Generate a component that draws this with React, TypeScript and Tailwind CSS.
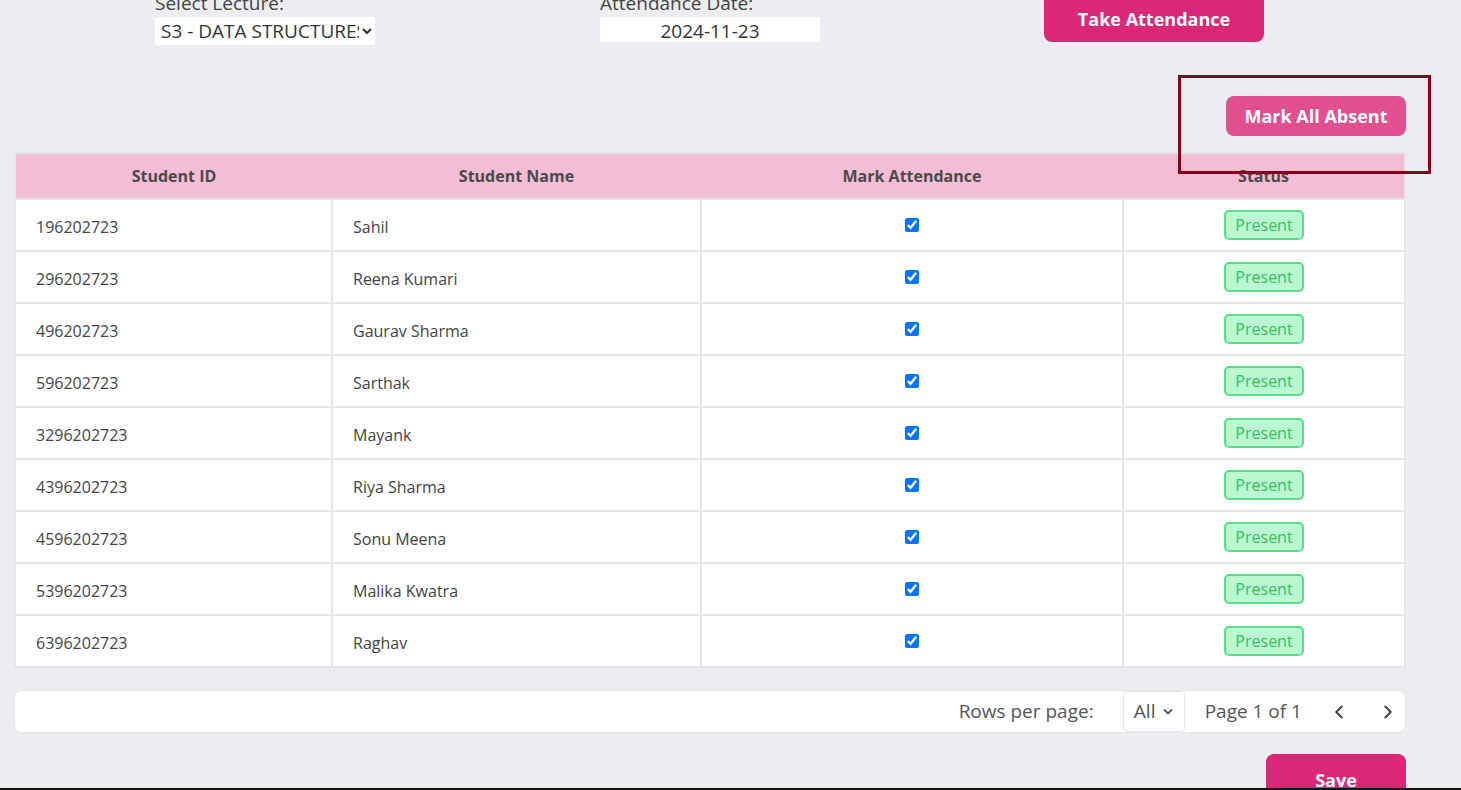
import { ChevronLeft, ChevronRight } from 'lucide-react'

const students = [
  { id: '196202723', name: 'Sahil' },
  { id: '296202723', name: 'Reena Kumari' },
  { id: '496202723', name: 'Gaurav Sharma' },
  { id: '596202723', name: 'Sarthak' },
  { id: '3296202723', name: 'Mayank' },
  { id: '4396202723', name: 'Riya Sharma' },
  { id: '4596202723', name: 'Sonu Meena' },
  { id: '5396202723', name: 'Malika Kwatra' },
  { id: '6396202723', name: 'Raghav' },
]

export default function App() {
  return (
    <div className="relative h-[790px] overflow-hidden bg-[#ecedf1] text-[#444] font-['Open_Sans','Noto_Sans',sans-serif]">
      <div className="pl-[14px] pr-[55px]">
        {/* Top controls */}
        <div className="flex h-[45px] items-start">
          <div className="ml-[141px] w-[220px] flex flex-col">
            <label className="-mt-[8px] text-[19px] leading-[22px] text-[#444]">Select Lecture:</label>
            <select className="mt-[3px] h-[28px] w-[220px] rounded-[3px] bg-white pl-[2px] text-[19px] text-[#333]">
              <option>S3 - DATA STRUCTURES</option>
            </select>
          </div>
          <div className="ml-[225px] w-[220px] flex flex-col">
            <label className="-mt-[8px] text-[19px] leading-[22px] text-[#444]">Attendance Date:</label>
            <input
              type="text"
              readOnly
              value="2024-11-23"
              className="mt-[3px] h-[25px] w-[220px] rounded-[2px] bg-white pt-[3px] text-center text-[19px] text-[#333] outline-none"
            />
          </div>
          <button className="-mt-[6px] ml-[224px] h-[48px] w-[220px] rounded-[8px] bg-[#db2777] pt-[3px] text-[18px] font-bold text-white">
            Take Attendance
          </button>
        </div>

        {/* Mark all absent */}
        <div className="mt-[51px] flex justify-end">
          <button className="h-[40px] w-[180px] rounded-[8px] bg-[#e0508f] text-[18px] font-bold text-white">
            Mark All Absent
          </button>
        </div>

        {/* Table */}
        <table className="mt-[16px] w-full border-collapse border-2 border-[#e5e6ea] bg-white text-[16px]">
          <thead>
            <tr className="h-[46px] bg-[#f3bdd5] text-[#4a4a4a]">
              <th className="w-[317px] font-bold">Student ID</th>
              <th className="w-[369px] font-bold">Student Name</th>
              <th className="w-[422px] font-bold">Mark Attendance</th>
              <th className="font-bold">Status</th>
            </tr>
          </thead>
          <tbody>
            {students.map((s) => (
              <tr key={s.id} className="h-[52px] border-t-2 border-[#e5e6ea]">
                <td className="pl-[20px] pt-[3px] text-[#444]">{s.id}</td>
                <td className="border-l-2 border-[#e5e6ea] pl-[20px] pt-[3px] text-[#444]">{s.name}</td>
                <td className="border-l-2 border-[#e5e6ea] text-center">
                  <input type="checkbox" defaultChecked className="h-[14px] w-[14px] -translate-y-[2px] align-middle accent-[#0075ff]" />
                </td>
                <td className="border-l-2 border-[#e5e6ea] text-center">
                  <span className="inline-flex h-[30px] w-[80px] items-center justify-center rounded-[5px] border-2 border-[#5fdc8a] bg-[#bbf7d0] text-[16px] text-[#35c163]">
                    Present
                  </span>
                </td>
              </tr>
            ))}
          </tbody>
        </table>

        {/* Pagination */}
        <div className="mt-[22px] flex h-[43px] items-center justify-end rounded-[8px] border border-[#e5e6ea] bg-white text-[19px] text-[#555]">
          <span>Rows per page:</span>
          <div className="ml-[29px] flex h-[41px] w-[62px] items-center justify-center gap-[8px] rounded-[4px] border border-[#e5e6ea]">
            <span>All</span>
            <svg width="10" height="7" viewBox="0 0 10 7" className="text-[#555]">
              <path d="M1 1.5 L5 5.5 L9 1.5" fill="none" stroke="currentColor" strokeWidth="1.8" />
            </svg>
          </div>
          <span className="ml-[20px]">Page 1 of 1</span>
          <ChevronLeft className="ml-[26px] h-[22px] w-[22px] text-[#444]" strokeWidth={2.2} />
          <ChevronRight className="ml-[27px] mr-[6px] h-[22px] w-[22px] text-[#444]" strokeWidth={2.2} />
        </div>

        {/* Save */}
        <div className="mt-[21px] flex justify-end">
          <button className="h-[48px] w-[140px] rounded-[8px] bg-[#db2777] pt-[4px] text-[18px] font-bold text-white">
            Save
          </button>
        </div>
      </div>

      {/* annotation box */}
      <div className="absolute left-[1178px] top-[75px] h-[99px] w-[253px] border-[3px] border-[#85001a]" />
      {/* bottom edge line */}
      <div className="absolute bottom-0 left-0 right-0 h-[2px] bg-[#111]" />
    </div>
  )
}
